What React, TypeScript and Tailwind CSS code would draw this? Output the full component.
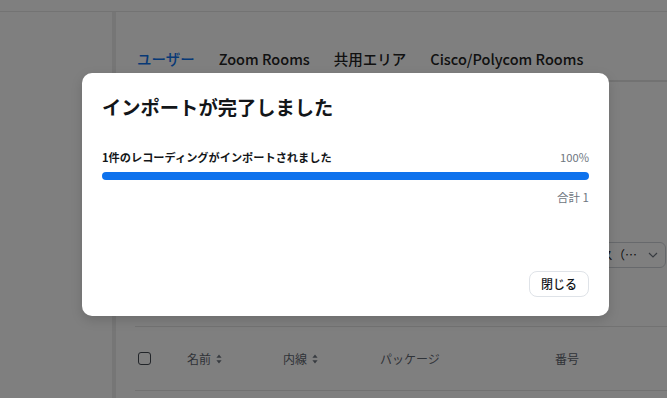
import React from "react";

const SortIcon = () => (
  <svg width="6" height="10" viewBox="0 0 6 10" className="ml-[5px]">
    <path d="M3 0.5 L5.6 3.8 H0.4 Z" fill="#6e7680" />
    <path d="M3 9.5 L5.6 6.2 H0.4 Z" fill="#6e7680" />
  </svg>
);

export default function App() {
  return (
    <div
      className="relative w-[667px] h-[398px] overflow-hidden bg-white"
      style={{ fontFamily: '"Noto Sans CJK JP", "Noto Sans", sans-serif' }}
    >
      {/* underlying page */}
      <div className="h-[12px] border-b border-[#e6e6e6]" />
      <div className="flex h-[386px]">
        <div className="w-[112px] shrink-0" />
        <div className="w-[4px] shrink-0 bg-[#ececec]" />
        <div className="flex-1 pl-[21px] pt-[37px] flex flex-col">
          <div className="flex gap-[24px] border-b-2 border-[#e4e4e4] pb-[11px] text-[14.5px] leading-[20px] font-medium text-[#222]">
            <span className="text-[#0e72ed]">ユーザー</span>
            <span>Zoom Rooms</span>
            <span>共用エリア</span>
            <span>Cisco/Polycom Rooms</span>
          </div>
          <div className="flex justify-end pr-[1px] mt-[160px]">
            <div className="flex items-center justify-end h-[26px] w-[140px] border border-[#cfd3d8] rounded-[6px] pr-[7px] text-[12px] text-[#131619]">
              <span className="whitespace-nowrap">ステータス（…</span>
              <svg width="10" height="6" viewBox="0 0 10 6" className="ml-[11px]">
                <path d="M1 1 L5 5 L9 1" stroke="#6e7680" strokeWidth="1.2" fill="none" />
              </svg>
            </div>
          </div>
          <div className="mt-[58px] ml-[-2px] border-t border-[#e4e4e4] border-b h-[65px] flex items-center text-[12px] text-[#5f6670]">
            <div className="w-[13px] h-[13px] ml-[3px] border border-[#444a52] rounded-[3px]" />
            <div className="ml-[36px] w-[96px] flex items-center">名前<SortIcon /></div>
            <div className="w-[97px] flex items-center">内線<SortIcon /></div>
            <div className="w-[175px]">パッケージ</div>
            <div>番号</div>
          </div>
        </div>
      </div>

      {/* overlay */}
      <div className="absolute inset-0 bg-black/50" />

      {/* dialog */}
      <div className="absolute left-[82px] top-[73px] w-[527px] h-[243px] bg-white rounded-[10px] shadow-[0_4px_12px_rgba(0,0,0,0.15)] px-[20px] pt-[20px] pb-[19px] flex flex-col">
        <div className="text-[19.3px] leading-[28px] font-bold text-[#131619]">
          インポートが完了しました
        </div>
        <div className="mt-[27px] flex justify-between items-center text-[11.2px] leading-[18px]">
          <span className="font-bold text-[#131619]">1件のレコーディングがインポートされました</span>
          <span className="text-[#6e7680]">100%</span>
        </div>
        <div className="mt-[6px] h-[8px] rounded-full bg-[#0e72ed]" />
        <div className="mt-[8px] text-right text-[11.5px] leading-[18px] text-[#6e7680]">合計 1</div>
        <div className="mt-auto flex justify-end">
          <button className="h-[26px] w-[60px] rounded-[8px] border border-[#dfe3e8] bg-white text-[12px] font-medium text-[#131619]">
            閉じる
          </button>
        </div>
      </div>
    </div>
  );
}
